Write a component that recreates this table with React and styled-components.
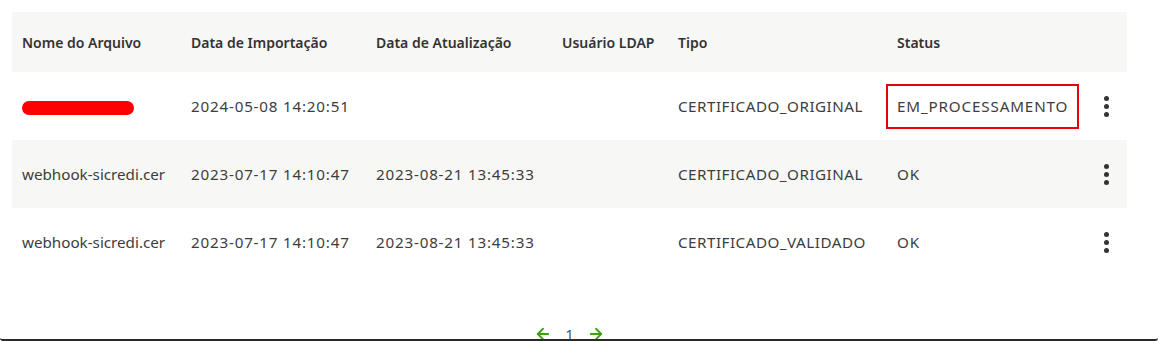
import React from "react"
import styled, { createGlobalStyle } from "styled-components"
import { ArrowLeft, ArrowRight } from "lucide-react"

const rows = [
  {
    name: null,
    imported: "2024-05-08 14:20:51",
    updated: "",
    user: "",
    type: "CERTIFICADO_ORIGINAL",
    status: "EM_PROCESSAMENTO",
    flagged: true,
  },
  {
    name: "webhook-sicredi.cer",
    imported: "2023-07-17 14:10:47",
    updated: "2023-08-21 13:45:33",
    user: "",
    type: "CERTIFICADO_ORIGINAL",
    status: "OK",
  },
  {
    name: "webhook-sicredi.cer",
    imported: "2023-07-17 14:10:47",
    updated: "2023-08-21 13:45:33",
    user: "",
    type: "CERTIFICADO_VALIDADO",
    status: "OK",
  },
]

const columns = [
  { label: "Nome do Arquivo", width: 169 },
  { label: "Data de Importação", width: 185 },
  { label: "Data de Atualização", width: 186 },
  { label: "Usuário LDAP", width: 116 },
  { label: "Tipo", width: 219 },
  { label: "Status", width: 200 },
  { label: "", width: 40 },
]

export default function App() {
  return (
    <>
      <GlobalStyle />
      <Panel>
        <Table>
          <colgroup>
            {columns.map((c, i) => (
              <col key={i} style={{ width: c.width }} />
            ))}
          </colgroup>
          <thead>
            <HeadRow>
              {columns.map((c, i) => (
                <Th key={i}>{c.label}</Th>
              ))}
            </HeadRow>
          </thead>
          <tbody>
            {rows.map((r, i) => (
              <Row key={i} $striped={i % 2 === 1}>
                <Td>{r.name ? r.name : <Redacted />}</Td>
                <Td $spacing={0.8}>{r.imported}</Td>
                <Td $spacing={0.8}>{r.updated}</Td>
                <Td>{r.user}</Td>
                <Td $spacing={0.5}>{r.type}</Td>
                <Td $spacing={0.85}>
                  {r.flagged ? <Highlight>{r.status}</Highlight> : r.status}
                </Td>
                <Td>
                  <Kebab aria-label="Ações">
                    <Dot />
                    <Dot />
                    <Dot />
                  </Kebab>
                </Td>
              </Row>
            ))}
          </tbody>
        </Table>
        <Pager>
          <PageArrow aria-label="Anterior">
            <ArrowLeft size={18} strokeWidth={2.4} />
          </PageArrow>
          <PageNumber>1</PageNumber>
          <PageArrow aria-label="Próxima">
            <ArrowRight size={18} strokeWidth={2.4} />
          </PageArrow>
        </Pager>
      </Panel>
    </>
  )
}

const GlobalStyle = createGlobalStyle`
  html, body {
    margin: 0;
    padding: 0;
    background: #ffffff;
  }
  body {
    font-family: "Noto Sans", "Open Sans", sans-serif;
    color: #3a3a3a;
  }
`

const Panel = styled.div`
  box-sizing: border-box;
  width: 1158px;
  height: 341px;
  padding: 12px 31px 0 12px;
  border-bottom: 2px solid #2a2a2a;
  border-radius: 0 0 3px 3px;
  overflow: hidden;
  background: #fff;
`

const Table = styled.table`
  width: 1115px;
  border-collapse: collapse;
  table-layout: fixed;
`

const HeadRow = styled.tr`
  background: #f7f7f5;
  height: 60px;
`

const Th = styled.th`
  text-align: left;
  padding: 0 0 0 10px;
  font-size: 14px;
  font-weight: 600;
  color: #333;
  white-space: nowrap;
`

const Row = styled.tr`
  height: 68px;
  background: ${(p) => (p.$striped ? "#f7f7f5" : "#ffffff")};
`

const Td = styled.td`
  padding: 0 0 0 10px;
  font-size: 15.2px;
  letter-spacing: ${(p) => p.$spacing || 0}px;
  color: #3d3d3d;
  white-space: nowrap;
  vertical-align: middle;
`

const Redacted = styled.span`
  display: inline-block;
  width: 112px;
  height: 14px;
  border-radius: 7px;
  background: #ff0000;
  vertical-align: middle;
`

const Highlight = styled.span`
  display: inline-block;
  margin-left: -11px;
  padding: 10px 9px 11px 9px;
  border: 2px solid #e8000b;
`

const Kebab = styled.button`
  display: flex;
  flex-direction: column;
  align-items: center;
  gap: 3px;
  margin-left: 7px;
  padding: 0;
  border: none;
  background: none;
  cursor: pointer;
`

const Dot = styled.span`
  width: 5px;
  height: 5px;
  border-radius: 50%;
  background: #333;
`

const Pager = styled.div`
  display: flex;
  align-items: center;
  justify-content: center;
  gap: 13px;
  margin-top: 48px;
`

const PageArrow = styled.button`
  display: flex;
  padding: 0;
  border: none;
  background: none;
  color: #3fa110;
  cursor: pointer;
`

const PageNumber = styled.span`
  font-size: 15px;
  color: #4a5a66;
`
